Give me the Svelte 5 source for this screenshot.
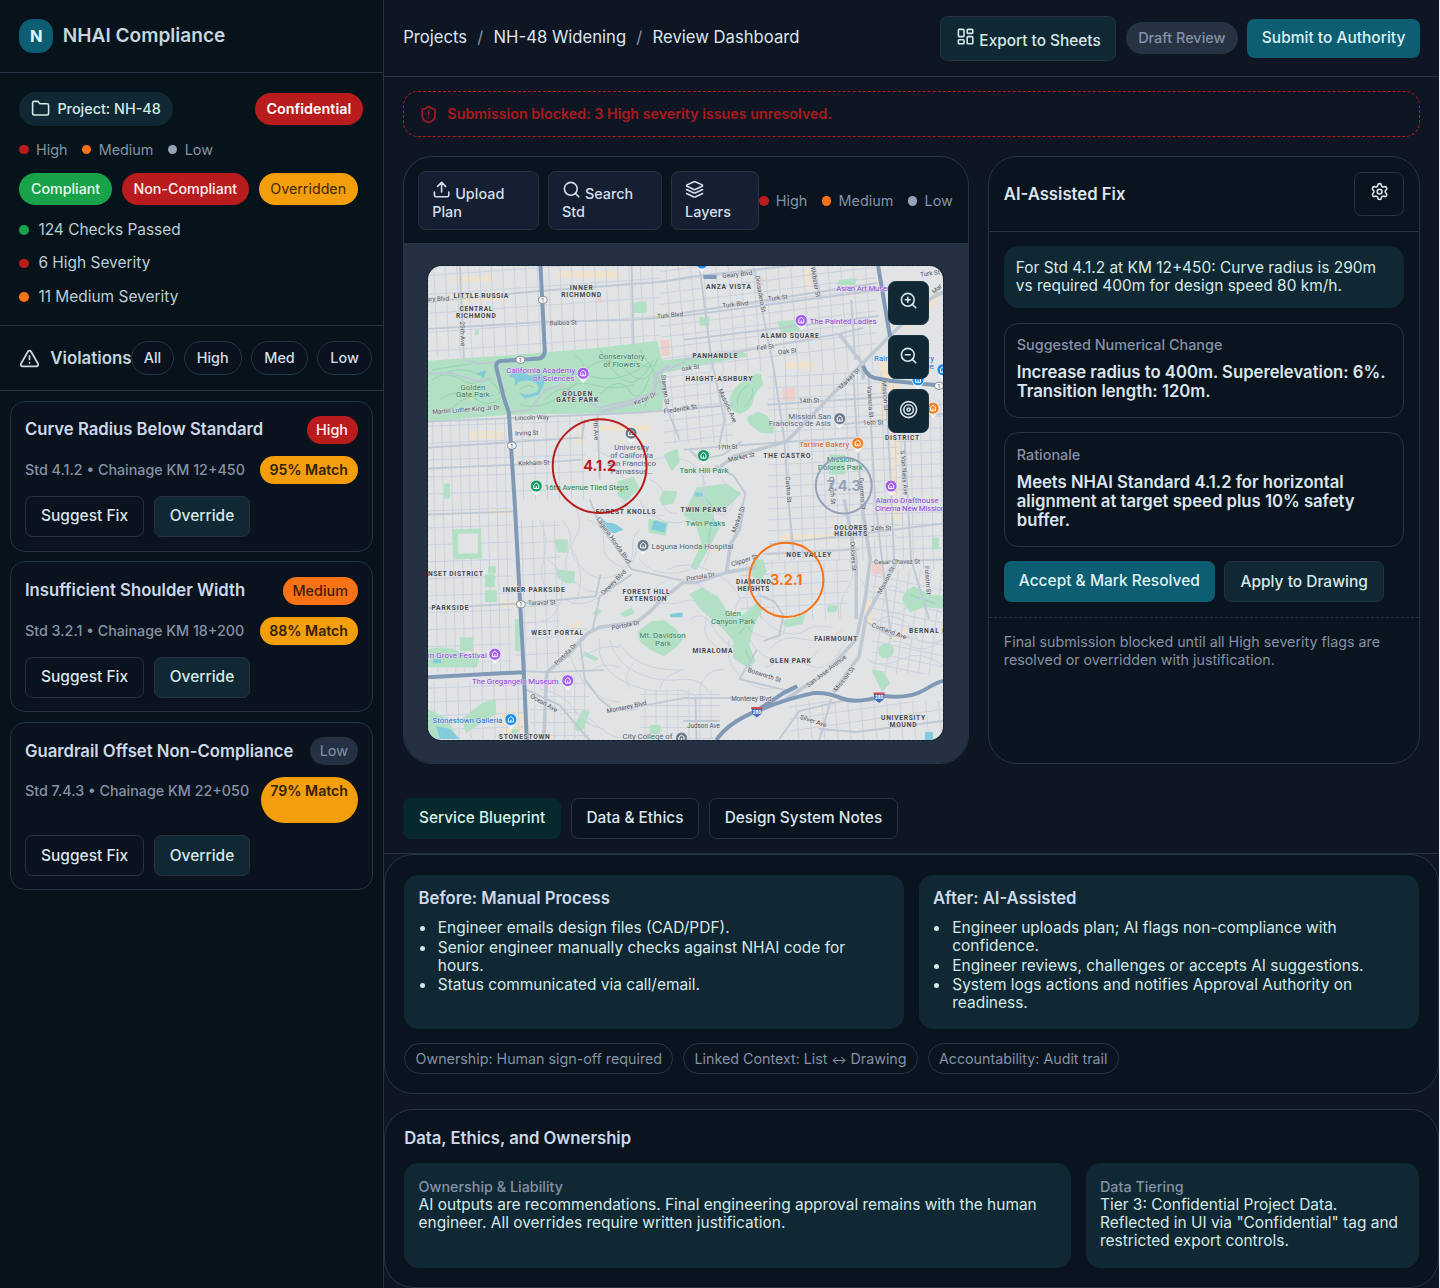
<script>
  const severities = [
    { name: 'High', tone: 'red' },
    { name: 'Medium', tone: 'orange' },
    { name: 'Low', tone: 'slate' }
  ];
  const stats = [
    { text: '124 Checks Passed', tone: 'green' },
    { text: '6 High Severity', tone: 'red' },
    { text: '11 Medium Severity', tone: 'orange' }
  ];
  const filters = ['All', 'High', 'Med', 'Low'];
  const violations = [
    { title: 'Curve Radius Below Standard', level: 'High', meta: 'Std 4.1.2 • Chainage KM 12+450', match: '95% Match' },
    { title: 'Insufficient Shoulder Width', level: 'Medium', meta: 'Std 3.2.1 • Chainage KM 18+200', match: '88% Match' },
    { title: 'Guardrail Offset Non-Compliance', level: 'Low', meta: 'Std 7.4.3 • Chainage KM 22+050', match: '79% Match', tall: true }
  ];
  const tabs = ['Service Blueprint', 'Data & Ethics', 'Design System Notes'];
  const before = [
    'Engineer emails design files (CAD/PDF).',
    'Senior engineer manually checks against NHAI code for hours.',
    'Status communicated via call/email.'
  ];
  const after = [
    'Engineer uploads plan; AI flags non-compliance with confidence.',
    'Engineer reviews, challenges or accepts AI suggestions.',
    'System logs actions and notifies Approval Authority on readiness.'
  ];

  // Residential street grids: [x, y, width, height, column step, row step, skew in degrees]
  const grids = [
    [428, 266, 232, 92, 11.5, 19, -4],
    [428, 418, 84, 255, 9, 17, -2],
    [516, 415, 70, 85, 12, 17, -2],
    [660, 266, 218, 106, 12.5, 11, -7],
    [664, 372, 70, 72, 13, 11, -7],
    [768, 372, 130, 190, 12, 11, -3],
    [896, 400, 48, 170, 10, 12, -2],
    [516, 520, 45, 150, 11, 16, -3],
    [428, 682, 96, 58, 12, 14, -2],
    [530, 678, 60, 62, 10, 13, 0],
    [640, 690, 80, 50, 11, 11, 0],
    [740, 560, 110, 60, 13, 11, -3],
    [872, 570, 72, 105, 11, 11, 12],
    [790, 702, 154, 38, 13, 12, -8]
  ].map(([x, y, w, h, dx, dy, skew], i) => {
    const t = Math.tan((skew * Math.PI) / 180);
    let d = '';
    for (let a = dx / 2; a < w; a += dx) d += `M${x + a} ${y}l${-t * h * 0.6} ${h}`;
    for (let b = dy / 2; b < h; b += dy) d += `M${x} ${y + b}l${w} ${t * w}`;
    return { id: i, x, y, w, h, d };
  });

  // Winding hillside streets
  const hills = [
    'M575 505q10 20 0 34t8 30q12 14 30 8t20-22q-2-18 8-26',
    'M562 520q14 14 6 34t14 34q12 8 30 4',
    'M588 520q18 6 16 24t20 24q14-6 12-20',
    'M560 540q16 6 20 30t-8 36M548 560q18 12 14 36t-20 26',
    'M600 640q-4 26 20 40t50 12q16-4 30 8',
    'M610 640q6 24 28 34t48 6q16 0 24 14',
    'M620 645q10 14 24 20t40 6M650 600q20 8 34 2t26 14',
    'M655 590q12-14 30-10t30 20q6 16 22 22',
    'M668 570q20-10 44 2t30 30M690 620q14-10 24 8t22 20',
    'M640 500q6 16 26 22t30-10q2-20 14-26',
    'M650 480q16 6 14 20t14 14M640 465q20-10 40-6t26 26q-2 20-14 26',
    'M620 500q20 20 44 16M596 450q24 10 30 34t-16 30',
    'M690 450q18 10 14 30t14 34q14 6 16-16',
    'M700 500q16 8 14 30t-10 36M712 470q20 12 16 40',
    'M740 600q-10 14 4 26t30 14q16-4 10-22',
    'M760 590q-8 20 8 34t34 10q10-10 30-6M770 650q14-16 34-10t40-10',
    'M750 640q10 20 34 24t36-14M766 668q26-12 44-2t34-20',
    'M730 640q-6 20 10 36t34 14M700 690q6-20 24-20',
    'M570 655q6 20 20 34t30 14M540 690q24 4 34 20t30 20',
    'M600 700q14 16 40 10M560 715q20-6 34 8t26 16',
    'M850 560q8 16-2 30t-6 30M862 580q8 20 22 10t24 10',
    'M876 625q10-12 24-6t18 22q10 6 26 0M880 650q14-14 30-4t34-6',
    'M868 660q14 10 34 0t42 6M880 610q20 10 30-4t34 0',
    'M565 600q16 10 34-2M548 640q14-14 40-10M640 560q10 14 30 14t28-10',
    'M580 660q20-16 40-12M590 672q14-10 30-4M630 690q-8-14 4-26M660 690q4-14 20-18',
    'M540 520q10 20 4 40t4 30M700 600q10 10 6 24t12 24'
  ];

  const parks = [
    'M428 361 500 356 590 349 658 341 662 361 686 361 686 369 664 373 663 410 637 413 507 415 428 422z',
    'M662 361 740 351 747 354 748 357 686 368 664 371z',
    'M730 402q0-12 16-22t16-4l2 9q-8 6-10 16t-14 13q-10-2-10-12z',
    'M748 417l11-5 9 4 7 12-2 6-12-1-12-10z',
    'M778 321l24-1v11l-20 2z', 'M840 280l18-2-2 7h-18z', 'M452 530l29-1 1 30-28 1z',
    'M488 567h8v7h-8zM485 575h10v13h-10zM485 591h12v12h-12z',
    'M460 638h13v14h-13z', 'M515 620h5v32h-5z', 'M554 540h14v13h-10z', 'M557 570l18 2v12h-9l-8-5z',
    'M618 482l16-5 6 12-14 13-8-6z', 'M664 455l14-6 2 14-8 9z',
    'M660 499l4-8 14 1-4 12-12 2z', 'M697 488l30-4 15 10-12 12-18 8 8 15-14 26-9 16-6-3 11-24-6-20-12-8z',
    'M649 519l20 4-3 13-17-3z', 'M638 632l14-10 13-1 11 8 7 11-6 8-13 9-14-7-10-8z',
    'M690 595l13-7 16 10 10 16 10 5 12-10 8-7 4 9-8 14-5 20 6 17-6 8-16-11v-17l-9-11-16-14-8-7z',
    'M754 560h10l3 12-5 9-10-4z', 'M783 622l20-6 4-3-4 12-16 3z', 'M828 606h11l-2 7h-9z',
    'M903 600q2-9 12-13l18 9h11v13l-20-1-13 5z', 'M879 651q2-8 10-6t5 10q-8 8-14 1z',
    'M872 670l12 2 7 12-8 9z', 'M428 650q20-4 30 2t22 4l-3 12h-49z',
    'M462 720l20-16 14-4v15l-30 19z', 'M428 710l20 10 10 20h-30z', 'M574 728l9-17 7 2-6 17-6 3z',
    'M620 615l12-7 3 6-10 4z', 'M585 652l14 7-3 3-13-6z', 'M830 455h16v20h-16z',
    'M632 303l15-2v12h-14z', 'M700 317h10v9h-10z', 'M933 538h7v12h-7z', 'M650 726h11v9h-11z',
    'M593 614l5-5 4 3-6 5z', 'M444 484h6v15h-6z', 'M512 740v-10h8z', 'M475 330h4v5h-4z'
  ];

  const waters = [
    'M509 376l6 3v10l10 10 14-4 6-12-3-9-12 2-12-6zM600 517l7 6 8 1 9 6-10 4-8-4z',
    'M654 521l13 3-2 9-13-3zM476 374l10-4-2 8zM433 660h8v4h-8zM436 727l14 3 10 10h-20z',
    'M670 615l13-2v5h-12zM695 493h8v4h-8zM926 733h8v8h-8z'
  ];

  const beige = [
    'M454 276h40v6h-40zM558 271h60v7h-60zM444 294h60v7h-60zM470 431h34v8h-34zM578 425h6v20h-6zM600 425h50v6h-50z',
    'M784 362h30v7h-30zM880 360h20v60h-20zM780 535h60v6h-60zM893 440h7v80h-7zM866 600h8v24h-8zM576 622h6l-8 12-4-2z',
    'M502 712h22v24h-22zM488 510h24v5h-24zM500 602h20v6h-20zM805 270h6v20h-6zM900 320l40-30v10l-30 30zM700 375h20v6h-20z'
  ];

  const roads = [
    'M428 302 540 291 660 282 690 277 820 262', 'M428 329 545 322 632 320 684 316 880 290',
    'M460 266 464 360 480 364 500 362', 'M632 266 634 345', 'M428 422 637 413 690 409 734 405',
    'M428 448 580 438', 'M428 469 516 465 582 460', 'M598 415 600 480', 'M585 420 582 440', 'M428 515 513 512',
    'M428 609 524 604 596 597 601 575', 'M684 313 878 283', 'M684 340 880 316', 'M684 360 750 350 840 334 864 328',
    'M755 268 768 337 775 372 785 440 789 500', 'M700 266 712 360 725 420 720 445',
    'M815 266 822 300', 'M852 300 856 360', 'M854 372 858 440 862 500 872 560', 'M869 372 876 500 892 640',
    'M886 380 891 470 895 560', 'M905 430 912 560 930 620', 'M768 405 890 397', 'M684 450 790 442 856 438',
    'M840 425 944 414', 'M770 545 850 536 944 524', 'M871 563 944 560', 'M764 555 860 550', 'M660 380 668 410 680 440',
    'M742 442 724 455 700 460 690 450', 'M789 500 795 560', 'M632 570 600 525 590 500', 'M632 570 682 581',
    'M632 575 600 597 593 630 580 640 585 680 600 700 615 712 684 699 757 699',
    'M525 690 560 706 580 730 590 741', 'M524 672 547 673 604 671', 'M758 650 740 680 790 692',
    'M820 730 857 733 944 722', 'M780 740 800 712 850 700', 'M832 700 820 741', 'M760 596 775 602 784 616 780 636 764 642',
    'M866 622 890 636 910 638', 'M684 722 720 722', 'M696 700 697 741', 'M668 372 676 366 686 362',
    'M428 374 450 373 480 382 492 378', 'M507 413 530 410 545 390 560 386 600 408 660 394',
    'M716 466 734 476 746 494 740 520'
  ];
  const mainRoads = [
    'M944 292 924 303 864 363 787 442 734 457 721 467', 'M744 507 740 530 731 545 727 573 697 583 684 583 662 600 651 612 637 623 600 628 588 634 568 656 547 673 544 741',
    'M727 573 745 570 757 568', 'M840 334 864 365 864 380', 'M845 500 857 560 857 620', 'M862 500 871 560 866 600 857 640 827 673 787 700 760 712',
    'M897 563 867 617 860 657 834 693', 'M601 412 632 404 655 392 656 375 670 366'
  ];

  // Round markers for museums, hospitals, food and parks
  const pins = [
    { x: 583.5, y: 373.5, fill: '#a45cf0' }, { x: 802, y: 320.5, fill: '#a45cf0' }, { x: 631.5, y: 433.5, fill: '#6b7c8c' },
    { x: 536.5, y: 486.5, fill: '#179b68' }, { x: 704, y: 456, fill: '#179b68' }, { x: 840.5, y: 419, fill: '#6b7c8c' },
    { x: 858.5, y: 443.5, fill: '#f28127' }, { x: 934, y: 408.5, fill: '#f28127' }, { x: 892, y: 486.5, fill: '#a45cf0' },
    { x: 643.5, y: 546, fill: '#6b7c8c' }, { x: 495, y: 655, fill: '#a45cf0' }, { x: 568, y: 681.5, fill: '#a45cf0' },
    { x: 511, y: 720.5, fill: '#1a8df0' }, { x: 919, y: 380, fill: '#1a8df0' }, { x: 944, y: 370, fill: '#1a8df0' },
    { x: 702.5, y: 263, fill: '#1a8df0' }, { x: 682, y: 739, fill: '#6b7c8c' }
  ];

  // District names: [text, centre x, baseline y, drawn width]
  const areas = [
    ['LITTLE RUSSIA', 481, 298, 55], ['CENTRAL', 476, 311, 33], ['RICHMOND', 476, 317.7, 40], ['INNER', 581.5, 290, 23],
    ['RICHMOND', 581.5, 296.7, 40], ['ANZA VISTA', 729, 289, 45], ['ALAMO SQUARE', 790.5, 338, 58], ['PANHANDLE', 715.5, 358.3, 45],
    ['HAIGHT-ASHBURY', 719.5, 381.5, 67], ['GOLDEN', 577.5, 396, 30], ['GATE PARK', 577.5, 402.7, 42], ['THE CASTRO', 787.5, 458.5, 47],
    ['DISTRICT', 903, 440, 34], ['FOREST KNOLLS', 626, 514.5, 60], ['TWIN PEAKS', 704, 512.5, 46], ['DOLORES', 851.5, 530.3, 33],
    ['HEIGHTS', 851.5, 537, 33], ['NOE VALLEY', 809.5, 557.3, 45], ['DIAMOND', 754, 584.4, 35], ['HEIGHTS', 754, 591.2, 32],
    ['NSET DISTRICT', 455.5, 576.3, 55], ['INNER PARKSIDE', 534, 593, 62], ['PARKSIDE', 450, 611, 37], ['WEST PORTAL', 557.5, 636, 52],
    ['FOREST HILL', 646.5, 594.5, 47], ['EXTENSION', 646, 601.5, 42], ['MIRALOMA', 713, 654, 40], ['GLEN PARK', 791, 664, 41],
    ['FAIRMOUNT', 836.5, 641.5, 43], ['BERNAL H', 929, 633.4, 38], ['UNIVERSITY', 904, 721.3, 44], ['MOUND', 904, 728.2, 27], ['STONESTOWN', 524.5, 740, 51]
  ];

  const places = [
    ['Conservatory', 622, 359.5, 46, 'park'], ['of Flowers', 622, 367, 37, 'park'], ['California Academy', 541, 373.5, 69, 'violet'],
    ['of Sciences', 554, 381, 41, 'violet'], ['Golden', 473, 390, 25, 'park'], ['Gate Park', 473, 397.5, 34, 'park'],
    ['The Painted Ladies', 844, 324.5, 67, 'violet'], ['Asian Art Museum', 868, 290.8, 62, 'violet'], ['Mission San', 810.5, 419, 43, 'gray'],
    ['Francisco de Asis', 800.5, 426.5, 62, 'gray'], ['Tartine Bakery', 825, 447.2, 50, 'food'], ['Mission', 841, 462.5, 27, 'park'],
    ['Dolores Park', 841, 470.3, 45, 'park'], ['Tank Hill Park', 704.5, 473.3, 49, 'park'], ['University', 632, 450.6, 35, 'gray'],
    ['of California', 632, 458.5, 43, 'gray'], ['San Francisco', 632, 466.3, 49, 'gray'], ['Parnassus…', 632, 474, 42, 'gray'],
    ['16th Avenue Tiled Steps', 587, 490.3, 84, 'park'], ['Twin Peaks', 706, 527, 40, 'park'], ['Laguna Honda Hospital', 693, 549.8, 82, 'gray'],
    ['Alamo Drafthouse', 908, 504, 63, 'violet'], ['Cinema New Mission', 911, 511.8, 70, 'violet'], ['Mt. Davidson', 663, 638.8, 46, 'park'],
    ['Park', 663.5, 647, 16, 'park'], ['Glen', 733.5, 617, 16, 'park'], ['Canyon Park', 733.5, 625, 44, 'park'],
    ['rn Grove Festival', 457, 658.5, 60, 'violet'], ['The Gregangelo Museum', 515.5, 685.3, 87, 'violet'], ['Stonestown Galleria', 467.5, 724, 70, 'blue'],
    ['City College of', 648, 739.8, 50, 'gray'], ['Rainbow Grocery', 905, 361, 60, 'blue'], ['Cooperative', 916, 369, 38, 'blue']
  ];

  // Street names: [text, centre x, centre y, angle]
  const streets = [
    ['ary Blvd', 438, 299, -2], ['Balboa St', 563.5, 323, -2], ['25th Ave', 462.5, 334, 88], ['Turk Blvd', 670.5, 315.5, -5],
    ['Geary Blvd', 738, 274.5, -6], ['Turk Blvd', 736, 304.5, -6], ['Turk St', 778.5, 298, -7], ['Divisadero St', 761, 294, 80],
    ['Webster St', 816, 282, 80], ['Fell St', 766, 347.5, -8], ['Oak St', 788, 351.5, -7], ['oak St', 691, 368, -8],
    ['Turk St', 931, 273.5, -7], ['Mar', 938, 289, -45], ['Market St', 850, 379, -45], ['14th St', 810, 401, -2],
    ['16th St', 874, 423, -2], ['Valencia St', 871, 402, 86], ['Mission St', 886, 396, 86], ['Masonic Ave', 728, 406, 65],
    ['ck St', 690, 407.5, -4], ['17th St', 728, 447.5, -3], ['Market St', 742, 457.5, -12], ['Castro St', 789, 490, 86],
    ['Church St', 833, 491, 86], ['Guerrero St', 863, 494, 86], ['S Van Ness Ave', 905, 473, 86], ['Stanyan St', 665.5, 390, 82],
    ['Frederick St', 681, 409.5, -8], ['Kezar Dr', 645.5, 399, -25], ['Martin Luther King Jr Dr', 466, 410, -4], ['Lincoln Way', 532, 418, -2],
    ['Irving St', 527, 433.5, -2], ['Kirkham St', 534, 463.5, -2], ['7th Ave', 596, 430, 86], ['Laguna Honda Blvd', 614, 541, 55],
    ['Dewey Blvd', 614, 583, -45], ['Portola Dr', 626, 626, -12], ['Portola Dr', 566, 655, -45], ['Portola Dr', 701, 577.5, -10],
    ['Clipper St', 745, 561, -18], ['Market St', 739, 520, -70], ['Taraval St', 542, 603.5, -2], ['Ocean Ave', 544, 704, 30],
    ['Monterey Blvd', 627, 708, -12], ['Monterey Blvd', 752, 700, 0], ['Bosworth St', 765, 676, 18], ['San Jose Avenue', 827, 672, -38],
    ['Mission St', 845, 680, -52], ['Mission St', 887, 581, -62], ['Dolores St', 854, 557, 86], ['24th St', 882, 529, -2],
    ['Cesar Chavez St', 898, 562.5, -1], ['Folsom St', 928.5, 581, 86], ['Cortland Ave', 890, 632, 20], ['Silver Ave', 814, 722, 18], ['Judson Ave', 704, 727, 0]
  ];
  const routes = [[543, 300], [520.5, 360], [512, 446], [521, 605], [940, 386]];
  const interstates = [[757.5, 712], [880, 697.5]];
</script>

{#snippet icon(kind, size)}
  <svg class="icon" width={size} height={size} viewBox="0 0 24 24" fill="none" stroke="currentColor" stroke-width="2" stroke-linecap="round" stroke-linejoin="round" aria-hidden="true">
    {#if kind === 'folder'}
      <path d="M20 20a2 2 0 0 0 2-2V8a2 2 0 0 0-2-2h-7.9a2 2 0 0 1-1.69-.9L9.6 3.9A2 2 0 0 0 7.93 3H4a2 2 0 0 0-2 2v13a2 2 0 0 0 2 2Z" />
    {:else if kind === 'alert'}
      <path d="m21.73 18-8-14a2 2 0 0 0-3.48 0l-8 14A2 2 0 0 0 4 21h16a2 2 0 0 0 1.73-3" /><path d="M12 9v4M12 17h.01" />
    {:else if kind === 'shield'}
      <path d="M20 13c0 5-3.5 7.5-7.66 8.95a1 1 0 0 1-.67-.01C7.5 20.5 4 18 4 13V6a1 1 0 0 1 1-1c2 0 4.5-1.2 6.24-2.72a1.17 1.17 0 0 1 1.52 0C14.51 3.81 17 5 19 5a1 1 0 0 1 1 1z" /><path d="M12 8v4M12 16h.01" />
    {:else if kind === 'upload'}
      <path d="M21 15v4a2 2 0 0 1-2 2H5a2 2 0 0 1-2-2v-4M17 8l-5-5-5 5M12 3v12" />
    {:else if kind === 'search' || kind === 'zoom-in' || kind === 'zoom-out'}
      <circle cx="11" cy="11" r="8" /><path d="m21 21-4.35-4.35" />
      {#if kind !== 'search'}<path d="M8 11h6" />{/if}
      {#if kind === 'zoom-in'}<path d="M11 8v6" />{/if}
    {:else if kind === 'layers'}
      <path d="m12.83 2.18a2 2 0 0 0-1.66 0L2.6 6.08a1 1 0 0 0 0 1.83l8.58 3.91a2 2 0 0 0 1.66 0l8.58-3.9a1 1 0 0 0 0-1.83Z" /><path d="m22 12-9.17 4.16a2 2 0 0 1-1.66 0L2 12M22 17l-9.17 4.16a2 2 0 0 1-1.66 0L2 17" />
    {:else if kind === 'dashboard'}
      <rect x="3" y="3" width="7" height="9" rx="1" /><rect x="14" y="3" width="7" height="5" rx="1" /><rect x="14" y="12" width="7" height="9" rx="1" /><rect x="3" y="16" width="7" height="5" rx="1" />
    {:else if kind === 'settings'}
      <path d="M9.671 4.136a2.34 2.34 0 0 1 4.659 0 2.34 2.34 0 0 0 3.319 1.915 2.34 2.34 0 0 1 2.33 4.033 2.34 2.34 0 0 0 0 3.831 2.34 2.34 0 0 1-2.33 4.033 2.34 2.34 0 0 0-3.319 1.915 2.34 2.34 0 0 1-4.659 0 2.34 2.34 0 0 0-3.32-1.915 2.34 2.34 0 0 1-2.33-4.033 2.34 2.34 0 0 0 0-3.831A2.34 2.34 0 0 1 6.35 6.051a2.34 2.34 0 0 0 3.319-1.915" /><circle cx="12" cy="12" r="3" />
    {:else if kind === 'target'}
      <circle cx="12" cy="12" r="10" /><circle cx="12" cy="12" r="6" /><circle cx="12" cy="12" r="2" />
    {/if}
  </svg>
{/snippet}

{#snippet legend()}
  <div class="legend">
    {#each severities as s}
      <span class="legend-item"><i class="dot {s.tone}"></i>{s.name}</span>
    {/each}
  </div>
{/snippet}

<div class="app">
  <aside class="sidebar">
    <header class="brand"><span class="logo">N</span><span class="brand-name">NHAI Compliance</span></header>

    <section class="summary">
      <div class="project-row">
        <span class="project">{@render icon('folder', 19.2)}Project: NH-48</span>
        <span class="pill confidential">Confidential</span>
      </div>
      {@render legend()}
      <div class="pills">
        <span class="pill green">Compliant</span><span class="pill red">Non-Compliant</span><span class="pill amber">Overridden</span>
      </div>
      <ul class="stats">
        {#each stats as s}<li><i class="dot {s.tone}"></i>{s.text}</li>{/each}
      </ul>
    </section>

    <div class="filter-bar">
      {@render icon('alert', 21)}
      <h2>Violations</h2>
      <div class="filters">{#each filters as f}<button>{f}</button>{/each}</div>
    </div>

    <div class="violations">
      {#each violations as v}
        <article class="violation">
          <div class="line"><h3>{v.title}</h3><span class="tag {v.level.toLowerCase()}">{v.level}</span></div>
          <div class="line meta"><span>{v.meta}</span><span class="tag match" class:tall={v.tall}>{v.match}</span></div>
          <div class="actions"><button class="btn">Suggest Fix</button><button class="btn filled">Override</button></div>
        </article>
      {/each}
    </div>
  </aside>

  <main class="main">
    <header class="topbar">
      <nav class="crumbs"><span>Projects</span><i>/</i><span>NH-48 Widening</span><i>/</i><span>Review Dashboard</span></nav>
      <button class="btn filled export">{@render icon('dashboard', 19.2)} Export to Sheets</button>
      <span class="draft">Draft Review</span>
      <button class="btn primary submit">Submit to Authority</button>
    </header>

    <div class="alert">{@render icon('shield', 19.2)}<span>Submission blocked: 3 High severity issues unresolved.</span></div>

    <div class="workspace">
      <section class="panel drawing">
        <div class="toolbar">
          <button class="tool upload">{@render icon('upload', 19.2)} Upload<br />Plan</button>
          <button class="tool find">{@render icon('search', 19.2)} Search<br />Std</button>
          <button class="tool layers">{@render icon('layers', 19.2)}<br />Layers</button>
          {@render legend()}
        </div>
        <div class="canvas">
          <div class="map">
            <svg class="map-art" viewBox="428 266 516 475" preserveAspectRatio="none" role="img" aria-label="Street map">
              <rect x="428" y="266" width="516" height="475" fill="#e2e3e5" />
              {#each beige as d}<path {d} fill="#efe3cd" />{/each}
              <path d="M597 296h5v7h-5zM661 340h9v16h-9zM756 278h8v9h-8zM783 388h13v13h-13zM873 565h11v10h-11z" fill="#f0cfcb" />
              {#each grids as g}
                <clipPath id="grid-{g.id}"><rect x={g.x} y={g.y} width={g.w} height={g.h} /></clipPath>
                <path d={g.d} clip-path="url(#grid-{g.id})" class="minor" />
              {/each}
              {#each parks as d}<path {d} fill="#b1e0c5" />{/each}
              <path d="M458 534h20v20h-20z" fill="#e2e3e5" />
              {#each waters as d}<path {d} fill="#82cbdc" />{/each}
              <path d="M513 390q4-11 16-9t9 10q-10 8-25-1z" fill="#b1e0c5" />
              <path class="trails" d="M432 380q14-10 30 0t24-8M440 400q20-14 34-2t26 0M548 370q20 14 40-2t40 4 30-14M600 395q20-20 30-4t20-14M604 365q14-14 30-4t20 4M545 400q12-14 26-10M575 355q14 10 6 20M738 405q-2-12 12-20M745 408q10-10 8-20M705 497q12 12 8 24t-4 26M740 635q8-14 12-2M746 650l6 14M912 596l24 8M432 370l40-6M640 350l20 30-16 28M520 390q8-8 14-2M440 375q20-10 40 0t20 20M450 410q20-20 44-14M540 380q20-14 50-4t60-14M560 395q14-16 34-10t40 0M520 405q20 6 40-8t30-30M600 350q10 20 24 30t30-20" />
              {#each hills as d}<path {d} class="minor" />{/each}
              {#each roads as d}<path {d} class="road" />{/each}
              {#each mainRoads as d}<path {d} class="road wide" />{/each}
              <path class="highway" d="M540.7 266 545 350Q545 359 537 359L504 361Q494 361 497 370L504 398 509 413 515 505 524 673 527 741M428 678 524 673" />
              <path class="highway" d="M717 741Q728 724 757 712T814 694Q828 693 842 699T884 697Q910 700 925 691T944 682M757 712 784 694 798 687" />
              <path class="highway" d="M879 266 891 337M864 366Q868 378 880 379L891 381 944 386M704 277h13" />
              {#each pins as p}
                <path d="M{p.x - 6} {p.y + 2}Q{p.x - 4} {p.y + 6} {p.x} {p.y + 10}Q{p.x + 4} {p.y + 6} {p.x + 6} {p.y + 2}z" fill="#f3f4f5" />
                <circle cx={p.x} cy={p.y} r="6" fill={p.fill} stroke="#f0f1f3" stroke-width=".8" />
                <path d="M{p.x - 2.5} {p.y + 2.5}v-3.5l2.5-2 2.5 2v3.5zM{p.x} {p.y}v2.5" fill="none" stroke="#fff" stroke-width="1" />
              {/each}
              {#each streets as [text, x, y, angle]}
                <text class="street" {x} y={y + 2} transform="rotate({angle} {x} {y})">{text}</text>
              {/each}
              {#each places as [text, x, y, width, tone]}<text class="place {tone}" {x} {y} textLength={width}>{text}</text>{/each}
              {#each areas as [text, x, y, width]}<text class="area" {x} {y} textLength={width}>{text}</text>{/each}
              {#each routes as [x, y]}
                <rect x={x - 4.5} y={y - 3.5} width="9" height="7" rx="3.5" fill="#f5f6f7" stroke="#737a82" stroke-width=".8" />
                <text class="route" {x} y={y + 2}>1</text>
              {/each}
              {#each interstates as [x, y]}
                <path d="M{x - 5.5} {y - 3}h11l-1 6-4.5 3.5-4.5-3.5z" fill="#3e6ec0" /><path d="M{x - 5.5} {y - 4}h11v2h-11z" fill="#d4494e" />
                <text class="shield-number" {x} y={y + 2.8}>280</text>
              {/each}
              <g class="marker high"><circle cx="600" cy="466.5" r="47" /><text x="600" y="471.5">4.1.2</text></g>
              <g class="marker low"><circle cx="844.5" cy="486" r="28" /><text x="844.5" y="491">7.4.3</text></g>
              <g class="marker medium"><circle cx="787" cy="580.5" r="37.2" /><text x="787" y="585.5">3.2.1</text></g>
            </svg>
            <div class="zoom-controls">
              <button aria-label="Zoom in">{@render icon('zoom-in', 19.2)}</button>
              <button aria-label="Zoom out">{@render icon('zoom-out', 19.2)}</button>
              <button aria-label="Recenter">{@render icon('target', 19.2)}</button>
            </div>
          </div>
        </div>
      </section>

      <section class="panel assist">
        <header><h2>AI-Assisted Fix</h2><button aria-label="Settings">{@render icon('settings', 19.2)}</button></header>
        <div class="assist-body">
          <p class="context">For Std 4.1.2 at KM 12+450: Curve radius is 290m vs required 400m for design speed 80 km/h.</p>
          <div class="advice"><span>Suggested Numerical Change</span><strong>Increase radius to 400m. Superelevation: 6%. Transition length: 120m.</strong></div>
          <div class="advice rationale"><span>Rationale</span><strong>Meets NHAI Standard 4.1.2 for horizontal alignment at target speed plus 10% safety buffer.</strong></div>
          <div class="actions"><button class="btn primary accept">Accept &amp; Mark Resolved</button><button class="btn filled">Apply to Drawing</button></div>
        </div>
        <footer>Final submission blocked until all High severity flags are resolved or overridden with justification.</footer>
      </section>
    </div>

    <nav class="tabs">{#each tabs as t, i}<button class="btn" class:active={i === 0}>{t}</button>{/each}</nav>

    <section class="sheet blueprint">
      <div class="two-up">
        <div class="tile"><h3>Before: Manual Process</h3><ul>{#each before as b}<li>{b}</li>{/each}</ul></div>
        <div class="tile"><h3>After: AI-Assisted</h3><ul>{#each after as a}<li>{a}</li>{/each}</ul></div>
      </div>
      <div class="chips">
        <span>Ownership: Human sign-off required</span>
        <span>Linked Context: List <b>↔</b> Drawing</span>
        <span>Accountability: Audit trail</span>
      </div>
    </section>

    <section class="sheet ethics">
      <h2>Data, Ethics, and Ownership</h2>
      <div class="ethics-grid">
        <div class="tile"><span>Ownership &amp; Liability</span><p>AI outputs are recommendations. Final engineering approval remains with the human engineer. All overrides require written justification.</p></div>
        <div class="tile"><span>Data Tiering</span><p>Tier 3: Confidential Project Data. Reflected in UI via "Confidential" tag and restricted export controls.</p></div>
      </div>
    </section>
  </main>
</div>

<style>
  :global(body) { margin: 0; background: #e8eef2; }
  * { box-sizing: border-box; }
  h2, h3, p, ul { margin: 0; padding: 0; }
  button { font: inherit; color: inherit; margin: 0; padding: 0; border: 0; background: none; }
  .icon { flex: none; display: inline-block; }
  .app { display: flex; width: 1439px; height: 1288px; overflow: hidden; background: #0f1623; color: #dbe5ee; font: 400 15.46px/18px Inter, sans-serif; --line: #263343; --fill: #102833; --muted: #8491a7; }

  .sidebar { width: 384px; flex: none; background: #06131a; border-right: 1.5px solid var(--line); }
  .brand { display: flex; align-items: center; gap: 9.6px; height: 73px; padding: 0 19.2px 1px; border-bottom: 1px solid var(--line); }
  .logo { display: grid; place-items: center; width: 34px; height: 34px; border-radius: 14px; background: #0d5d73; color: #e0f5f3; font-size: 16.5px; font-weight: 700; }
  .brand-name { font-size: 19.1px; font-weight: 600; color: #c5d5df; padding-bottom: 1px; }
  .summary { height: 253px; padding: 19px 20px 0 19.2px; border-bottom: 1px solid var(--line); }
  .project-row { display: flex; align-items: center; justify-content: space-between; height: 34px; }
  .project { display: flex; align-items: center; gap: 7px; height: 34px; padding: 0 12px; border-radius: 17px; background: var(--fill); font-size: 14.4px; font-weight: 500; color: #d5e8e8; }
  .pill { display: inline-flex; align-items: center; height: 32.5px; padding: 0 11.8px; border-radius: 17px; font-size: 14.25px; font-weight: 500; }
  .confidential { background: #b91c1c; color: #fff; font-weight: 600; font-size: 14.4px; }
  .pill.green { background: #18a24a; color: #e6fbee; }
  .pill.red { background: #b91c1c; color: #fff0f0; }
  .pill.amber { background: #f59e0b; color: #3d2805; font-weight: 400; }
  .legend { display: flex; gap: 14.4px; font-size: 14.4px; color: var(--muted); }
  .legend-item { display: flex; align-items: center; gap: 7.2px; }
  .dot { width: 9.6px; height: 9.6px; border-radius: 50%; flex: none; }
  .dot.red { background: #b91c1c; }
  .dot.orange { background: #f97316; }
  .dot.slate { background: #94a3b8; }
  .dot.green { background: #18a24a; }
  .summary .legend { margin-top: 14.5px; height: 18px; }
  .pills { display: flex; gap: 9.6px; margin-top: 14px; }
  .stats { list-style: none; margin-top: 15.8px; display: grid; row-gap: 15.6px; color: #bccdd6; }
  .stats li { display: flex; align-items: center; gap: 9.6px; height: 18px; }
  .filter-bar { display: flex; align-items: center; height: 65px; padding: 0 11px 0 19.2px; border-bottom: 1px solid var(--line); color: #c5d5df; }
  .filter-bar h2 { margin-left: 10px; font-size: 16.9px; font-weight: 600; width: 80.5px; flex: none; white-space: nowrap; }
  .filters { display: flex; gap: 9.6px; color: #d5dfeb; font-size: 14.4px; font-weight: 500; }
  .filters button { height: 34.5px; padding: 0 12px; border: 1px solid var(--line); border-radius: 18px; background: #0a121d; }
  .violations { display: flex; flex-direction: column; gap: 9.6px; padding: 9.6px 10px 0 9.6px; }
  .violation { padding: 14.4px; border: 1px solid var(--line); border-radius: 15px; background: #0a121d; height: 151px; }
  .violation:last-child { height: 168.5px; }
  .line { display: flex; justify-content: space-between; height: 28px; align-items: center; }
  .line h3 { font-size: 16.68px; font-weight: 600; color: #cbd9ea; padding-bottom: 1px; }
  .line.meta { margin-top: 12px; height: auto; align-items: flex-start; font-size: 14.3px; font-weight: 500; color: var(--muted); line-height: 28px; }
  .tag { height: 28px; padding: 0 9.6px; border-radius: 24px; font-size: 14.4px; font-weight: 500; line-height: 28px; }
  .tag.high { background: #b91c1c; color: #fff0f0; }
  .tag.medium { background: #f97316; color: #431d08; }
  .tag.low { background: #243142; color: #8491a7; font-weight: 400; }
  .tag.match { background: #f59e0b; color: #33210a; font-weight: 600; font-size: 14.15px; }
  .tag.tall { height: 46px; }
  .actions { display: flex; gap: 9.6px; margin-top: 12px; }
  .btn { height: 41px; padding: 0 15px; border: 1px solid var(--line); border-radius: 7.5px; font-size: 15.5px; font-weight: 500; color: #dbe5ee; white-space: nowrap; }
  .btn.filled { background: var(--fill); color: #d5e8e8; }
  .btn.primary { border: 0; background: #0d5d73; color: #dcf3f3; }

  .main { flex: 1; min-width: 0; }
  .topbar { display: flex; align-items: center; gap: 9.6px; height: 77px; padding: 0 19.2px; border-bottom: 1.5px solid var(--line); }
  .crumbs { display: flex; gap: 10.2px; margin-right: auto; padding-bottom: 1.5px; font-size: 16.66px; }
  .crumbs i { font-style: normal; color: #8491a7; }
  .export { height: 45px; padding: 1px 14.6px 0; font-size: 15.4px; }
  .draft { height: 32px; padding: 0 12.2px; border-radius: 17px; background: var(--line); font-size: 14.45px; font-weight: 500; line-height: 32px; color: #8491a7; }
  .submit { height: 39px; padding: 0 14.5px; }
  .alert { display: flex; align-items: center; gap: 9.6px; height: 46px; margin: 14.4px 19.2px 0; padding: 0 14.4px; border: 1px dashed #b91c1c; border-radius: 15px; color: #a91b1f; font-size: 14.29px; font-weight: 600; }
  .workspace { display: flex; gap: 19.2px; margin: 19px 19.2px 0; height: 608px; }
  .panel { border: 1px solid var(--line); border-radius: 29px; background: #0a141e; overflow: hidden; }
  .drawing { width: 566px; flex: none; }
  .toolbar { display: flex; align-items: center; height: 87px; padding: 0 14px; border-bottom: 1px solid var(--line); }
  .tool { height: 58.5px; padding: 0 13px; margin-right: 9.2px; border: 1px solid var(--line); border-radius: 7.5px; background: #142031; text-align: left; font-size: 14.4px; font-weight: 500; line-height: 18px; white-space: nowrap; color: #d5dfeb; }
  .upload { width: 120.5px; }
  .find { width: 114px; }
  .tool.layers { width: 88px; margin-right: 0; }
  .toolbar .legend { padding-top: 1px; }
  .canvas { height: 520px; padding: 21px 23px; background: #243142; }
  .map { position: relative; width: 517px; height: 476px; border: 1px dashed #111b29; border-radius: 14.4px; overflow: hidden; }
  .map-art { display: block; width: 100%; height: 100%; }
  .zoom-controls { position: absolute; top: 14.4px; right: 14px; display: grid; gap: 9.6px; }
  .zoom-controls button { display: grid; place-items: center; width: 41px; height: 44.5px; padding-bottom: 4px; border-radius: 7.5px; background: #102833; border: 1px solid #1b3240; }
  .minor { fill: none; stroke: #c8d1dd; stroke-width: .9; }
  .trails { fill: none; stroke: #8fd0ab; stroke-width: .8; }
  .road { fill: none; stroke: #bfc9d4; stroke-width: 1.9; stroke-linejoin: round; }
  .road.wide { stroke-width: 3.6; }
  .highway { fill: none; stroke: #7f99b7; stroke-width: 4; stroke-linejoin: round; }
  .map-art text { font-family: Roboto, sans-serif; text-anchor: middle; paint-order: stroke; stroke: #e2e3e5; stroke-width: .9; stroke-linejoin: round; }
  .area { font-size: 6.7px; font-weight: 700; fill: #484b50; }
  .place { font-size: 7.9px; font-weight: 400; }
  .map-art .park { fill: #2e8262; stroke: #cfe7d8; }
  .violet { fill: #8d46dc; }
  .gray { fill: #56677a; }
  .food { fill: #d0651a; }
  .blue { fill: #1878dc; }
  .street { font-size: 6.4px; fill: #4c535e; }
  .map-art .route { font-size: 5.5px; fill: #444; stroke: none; }
  .map-art .shield-number { font-size: 4.8px; font-weight: 700; fill: #fff; stroke: none; }
  .marker circle { fill: none; stroke: currentColor; stroke-width: 2; }
  .map-art .marker text { font: 700 14.4px Inter, sans-serif; fill: currentColor; stroke: none; }
  .marker.high { color: #b91c1c; }
  .marker.medium { color: #f97316; }
  .marker.low { color: #94a3b8; }

  .assist { flex: 1; }
  .assist header { display: flex; align-items: center; justify-content: space-between; height: 74.5px; padding: 0 14.4px; border-bottom: 1px solid var(--line); }
  .assist h2 { font-size: 16.68px; font-weight: 600; padding-bottom: 1px; }
  .assist header button { display: grid; place-items: center; width: 50.5px; height: 44.5px; padding-bottom: 5px; border: 1px solid var(--line); border-radius: 7.5px; }
  .assist-body { display: flex; flex-direction: column; gap: 14.4px; height: 386px; padding: 14.4px 14.4px 0; border-bottom: 1px dashed var(--line); }
  .context { height: 62px; padding: 12.5px 12px; border-radius: 14.4px; background: var(--fill); color: #d5e8e8; }
  .advice { height: 95px; padding: 12.5px 12px; border: 1px solid var(--line); border-radius: 14.4px; display: flex; flex-direction: column; gap: 9px; }
  .advice span { font-size: 14.4px; font-weight: 500; color: var(--muted); }
  .advice strong { font-size: 16.68px; font-weight: 600; line-height: 19.2px; }
  .rationale { height: 115px; }
  .assist .actions { margin-top: 0; }
  .accept { padding-bottom: 2px; }
  .assist footer { padding: 15.2px 14.4px; font-size: 14.28px; color: var(--muted); }

  .tabs { display: flex; gap: 9.6px; height: 90px; padding: 33.5px 19.2px 0; border-bottom: 1px solid var(--line); }
  .tabs .btn { background: #0a141e; font-size: 15.4px; padding: 0 14.8px; }
  .tabs .active { background: #07282c; border-color: #07282c; color: #d5f0e8; }
  .sheet { border: 1px solid var(--line); border-radius: 29px; background: #0a141e; padding: 19.2px; }
  .blueprint { height: 240px; }
  .two-up { display: grid; grid-template-columns: 1fr 1fr; gap: 14.4px; height: 154.5px; }
  .tile { padding: 14.4px; border-radius: 14.4px; background: var(--fill); color: #d5e8e8; }
  .tile h3 { font-size: 16.68px; line-height: 19.2px; font-weight: 600; color: #cbd9ea; }
  .tile ul { list-style: none; margin-top: 11px; }
  .tile li { position: relative; padding-left: 19.2px; margin-bottom: 1.6px; }
  .tile li::before { content: ''; position: absolute; left: 1px; top: 7px; width: 5px; height: 5px; border-radius: 50%; background: #d5e8e8; }
  .chips { display: flex; gap: 9.6px; margin-top: 14.4px; }
  .chips span { height: 30.5px; padding: 0 10.4px; border: 1px solid var(--line); border-radius: 16px; font-size: 14.28px; line-height: 29px; color: var(--muted); }
  .chips b { font-weight: 400; font-size: 11.2px; line-height: 1; }
  .ethics { height: 179.5px; margin-top: 14.4px; padding-top: 18.4px; }
  .ethics h2 { font-size: 16.68px; line-height: 20px; font-weight: 600; color: #cbd9ea; }
  .ethics-grid { display: grid; grid-template-columns: 667px 1fr; gap: 14.4px; margin-top: 15px; height: 104.5px; }
  .ethics .tile > span { display: block; font-size: 14.35px; font-weight: 500; color: #8491a7; }
</style>
